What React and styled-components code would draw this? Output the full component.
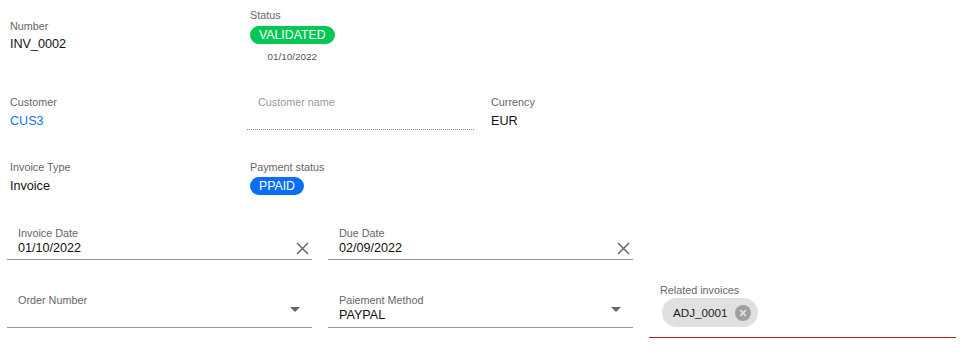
import styled, { createGlobalStyle } from 'styled-components';

const GlobalStyle = createGlobalStyle`
  body {
    margin: 0;
    background: #fff;
    font-family: "Liberation Sans", Arial, sans-serif;
    color: #000;
  }
`;

const Page = styled.div`
  padding: 9px 0 0 7px;
  width: 950px;
`;

const InfoGrid = styled.div`
  display: grid;
  grid-template-columns: 240px 241px 240px;
  padding-left: 3px;
  align-items: center;
  margin-bottom: ${props => props.$mb || 0}px;
`;

const Info = styled.div`
  display: flex;
  flex-direction: column;
  align-items: flex-start;
  gap: ${props => props.$gap ?? 4}px;
`;

const Label = styled.div`
  font-size: 10.8px;
  line-height: 13px;
  color: ${props => (props.$muted ? '#9a9a9a' : '#666')};
`;

const Value = styled.div`
  font-size: 12.6px;
  line-height: 17px;
  min-height: 17px;
  color: ${props => props.$color || '#111'};
`;

const StatusBox = styled.div`
  display: inline-flex;
  flex-direction: column;
  align-items: center;
  justify-self: start;
`;

const StatusLabel = styled(Label)`
  align-self: flex-start;
`;

const Badge = styled.span`
  display: inline-block;
  background: ${props => props.$bg};
  color: #fff;
  font-size: 12.3px;
  line-height: 18px;
  padding: 0 9px;
  border-radius: 10px;
  margin-top: ${props => props.$mt || 0}px;
`;

const SmallDate = styled.div`
  font-size: 9.9px;
  line-height: 13px;
  color: #555;
  margin-top: 6px;
`;

const NameInput = styled.div`
  margin-left: -3px;
  width: 227px;
  padding-left: 11px;
  box-sizing: border-box;
  height: 34px;
  border-bottom: 1px dotted #888;
`;

const FieldGrid = styled.div`
  display: grid;
  grid-template-columns: 305px 305px 307px;
  column-gap: 16px;
  align-items: center;
  margin-bottom: ${props => props.$mb || 0}px;
`;

const Field = styled.div`
  display: flex;
  align-items: center;
  padding: 0 3px ${props => props.$pb ?? 2}px 11px;
  border-bottom: 1px solid ${props => props.$line || '#949494'};
`;

const FieldBody = styled.div`
  flex: 1;
  display: flex;
  flex-direction: column;
  gap: ${props => props.$gap ?? 0}px;
`;

const ValueRow = styled.div`
  display: flex;
  align-items: center;
  justify-content: space-between;
`;

const IconBtn = styled.span`
  display: inline-flex;
  align-items: center;
  justify-content: center;
  width: ${props => props.$w || 14}px;
  height: 17px;
  margin-right: ${props => props.$mr || 0}px;
`;

const Chip = styled.span`
  align-self: flex-start;
  display: inline-flex;
  align-items: center;
  gap: 7px;
  height: 29px;
  margin-left: 2px;
  padding: 0 7px 0 11px;
  border-radius: 15px;
  background: #e0e0e0;
  font-size: 11.7px;
  color: #222;
`;

const ClearIcon = () => (
  <svg width="13" height="13" viewBox="0 0 13 13">
    <path d="M1 1 L12 12 M12 1 L1 12" stroke="#666" strokeWidth="1.5" />
  </svg>
);

const ArrowIcon = () => (
  <svg width="10" height="5" viewBox="0 0 10 5">
    <path d="M0 0 L10 0 L5 5 Z" fill="#666" />
  </svg>
);

const CancelIcon = () => (
  <svg width="16" height="16" viewBox="0 0 16 16">
    <circle cx="8" cy="8" r="8" fill="#a0a0a0" />
    <path d="M5.2 5.2 L10.8 10.8 M10.8 5.2 L5.2 10.8" stroke="#e0e0e0" strokeWidth="1.8" />
  </svg>
);

export default function App() {
  return (
    <Page>
      <GlobalStyle />
      <InfoGrid $mb={33}>
        <Info $gap={3}>
          <Label>Number</Label>
          <Value>INV_0002</Value>
        </Info>
        <StatusBox>
          <StatusLabel>Status</StatusLabel>
          <Badge $bg="#06c755" $mt={4}>VALIDATED</Badge>
          <SmallDate>01/10/2022</SmallDate>
        </StatusBox>
        <div />
      </InfoGrid>

      <InfoGrid $mb={31}>
        <Info>
          <Label>Customer</Label>
          <Value $color="#1a73e8">CUS3</Value>
        </Info>
        <NameInput>
          <Label $muted>Customer name</Label>
        </NameInput>
        <Info>
          <Label>Currency</Label>
          <Value>EUR</Value>
        </Info>
      </InfoGrid>

      <InfoGrid $mb={32}>
        <Info>
          <Label>Invoice Type</Label>
          <Value>Invoice</Value>
        </Info>
        <Info $gap={3}>
          <Label>Payment status</Label>
          <Badge $bg="#0b6ef6">PPAID</Badge>
        </Info>
        <div />
      </InfoGrid>

      <FieldGrid $mb={24}>
        <Field>
          <FieldBody>
            <Label>Invoice Date</Label>
            <ValueRow>
              <Value>01/10/2022</Value>
              <IconBtn><ClearIcon /></IconBtn>
            </ValueRow>
          </FieldBody>
        </Field>
        <Field>
          <FieldBody>
            <Label>Due Date</Label>
            <ValueRow>
              <Value>02/09/2022</Value>
              <IconBtn><ClearIcon /></IconBtn>
            </ValueRow>
          </FieldBody>
        </Field>
        <div />
      </FieldGrid>

      <FieldGrid>
        <Field $pb={3}>
          <FieldBody>
            <Label>Order Number</Label>
            <Value />
          </FieldBody>
          <IconBtn $w={10} $mr={9}><ArrowIcon /></IconBtn>
        </Field>
        <Field $pb={3}>
          <FieldBody>
            <Label>Paiement Method</Label>
            <Value>PAYPAL</Value>
          </FieldBody>
          <IconBtn $w={10} $mr={9}><ArrowIcon /></IconBtn>
        </Field>
        <Field $line="#a8241a" $pb={10}>
          <FieldBody $gap={1}>
            <Label>Related invoices</Label>
            <Chip>
              ADJ_0001
              <CancelIcon />
            </Chip>
          </FieldBody>
        </Field>
      </FieldGrid>
    </Page>
  );
}
